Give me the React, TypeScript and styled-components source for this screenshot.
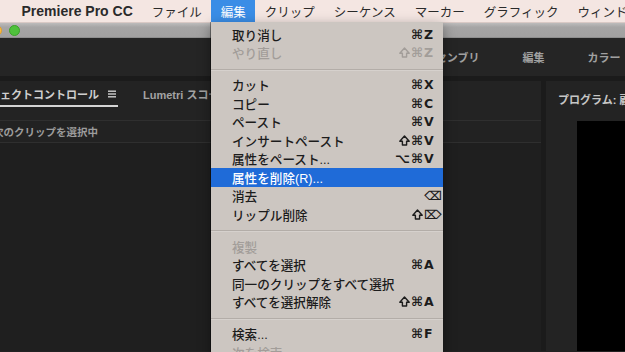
import styled, { createGlobalStyle } from 'styled-components';

const GlobalStyle = createGlobalStyle`
  html, body {
    margin: 0;
    padding: 0;
    background: #222222;
    overflow: hidden;
  }
  * {
    box-sizing: border-box;
  }
`;

const jp = `"Liberation Sans", "Noto Sans CJK JP", sans-serif`;

const Screen = styled.div`
  position: relative;
  width: 625px;
  height: 352px;
  overflow: hidden;
  background: #222222;
  font-family: ${jp};
`;

const MenuBar = styled.div`
  display: flex;
  align-items: center;
  height: 23px;
  padding-left: 12px;
  background: #f4e6e2;
  border-bottom: 1px solid #d9c9c5;
`;

type BarItemProps = { $active?: boolean; $bold?: boolean };

const BarItem = styled.div<BarItemProps>`
  display: flex;
  align-items: center;
  height: 22px;
  padding: 0 9.5px;
  white-space: nowrap;
  font-size: ${(p) => (p.$bold ? '14px' : '12.5px')};
  font-weight: ${(p) => (p.$bold ? 700 : 400)};
  color: ${(p) => (p.$active ? '#ffffff' : '#2a2a2a')};
  background: ${(p) => (p.$active ? '#3a8de6' : 'transparent')};
`;

const TitleBar = styled.div`
  display: flex;
  align-items: center;
  height: 15px;
  background: linear-gradient(#bdbcbc, #a6a5a5 30%, #a2a1a1);
  border-bottom: 1px solid #8e8e8e;
`;

const Lights = styled.div`
  display: flex;
  gap: 7px;
  margin-left: -27px;
`;

const Light = styled.span<{ $color: string; $edge: string }>`
  width: 11px;
  height: 11px;
  border-radius: 50%;
  background: ${(p) => p.$color};
  border: 1px solid ${(p) => p.$edge};
`;

const WorkspaceBar = styled.div`
  display: flex;
  align-items: center;
  gap: 43px;
  height: 43px;
  padding-left: 425px;
  background: #252525;
  border-bottom: 5px solid #1b1b1b;
`;

const WorkspaceTab = styled.span`
  font-size: 11px;
  font-weight: 700;
  color: #a0a0a0;
  white-space: nowrap;
`;

const Panels = styled.div`
  display: flex;
  height: 270px;
`;

const LeftPanel = styled.div`
  flex: 1;
  display: flex;
  flex-direction: column;
  background: #1f1f1f;
  overflow: hidden;
`;

const PanelHeader = styled.div`
  display: flex;
  align-items: flex-end;
  gap: 21px;
  height: 26px;
  background: #232323;
`;

const PanelTab = styled.div<{ $active?: boolean }>`
  display: flex;
  align-items: center;
  gap: 9px;
  height: 26px;
  padding: 2px 2px 0 4px;
  margin-left: ${(p) => (p.$active ? '-26px' : '0')};
  font-size: 11px;
  font-weight: 700;
  white-space: nowrap;
  color: ${(p) => (p.$active ? '#cfcfcf' : '#a3a3a3')};
  border-bottom: 2px solid ${(p) => (p.$active ? '#d4d4d4' : 'transparent')};
`;

const ToolStrip = styled.div`
  height: 14px;
  background: #232323;
  border-bottom: 1px solid #2f2f2f;
`;

const ClipRow = styled.div`
  display: flex;
  align-items: center;
  height: 22px;
  background: #222222;
  border-bottom: 1px solid #2f2f2f;
`;

const ClipText = styled.span`
  margin-left: -7px;
  font-size: 10.5px;
  font-weight: 700;
  color: #9c9c9c;
  white-space: nowrap;
`;

const Divider = styled.div`
  width: 5px;
  background: #1b1b1b;
`;

const RightPanel = styled.div`
  width: 79px;
  display: flex;
  flex-direction: column;
  background: #232323;
  overflow: hidden;
`;

const MonitorHeader = styled.div`
  display: flex;
  align-items: center;
  height: 40px;
  padding: 0 0 4px 12px;
  font-size: 11px;
  font-weight: 700;
  color: #c6c6c6;
  white-space: nowrap;
`;

const Video = styled.div`
  flex: 1;
  margin-left: 31px;
  background: #000000;
`;

const Dropdown = styled.div`
  position: absolute;
  left: 211px;
  top: 22px;
  width: 232px;
  padding-top: 3px;
  background: #ccc6c1;
  box-shadow: -1px 0 0 rgba(0, 0, 0, 0.35), 0 4px 12px rgba(0, 0, 0, 0.4);
`;

type RowProps = { $selected?: boolean; $disabled?: boolean };

const Row = styled.div<RowProps>`
  display: flex;
  align-items: center;
  height: 18.5px;
  padding: 0 7px 0 21px;
  font-size: 12.6px;
  font-weight: 500;
  white-space: nowrap;
  color: ${(p) => (p.$selected ? '#ffffff' : p.$disabled ? '#a29d99' : '#1c1c1c')};
  background: ${(p) => (p.$selected ? '#1f6bd8' : 'transparent')};
`;

const Label = styled.span`
  flex: 1;
`;

const Mods = styled.span`
  display: flex;
  align-items: center;
  gap: 1px;
  font-family: "DejaVu Sans", sans-serif;
  font-size: 13px;
  font-weight: 700;
`;

const Key = styled.span`
  width: 12px;
  margin-left: 1px;
  font-family: "DejaVu Sans", sans-serif;
  font-size: 12.5px;
  font-weight: 700;
  text-align: left;
  overflow: visible;
`;

const Separator = styled.div`
  height: 13.5px;
  padding-top: 6.5px;

  &::after {
    content: '';
    display: block;
    height: 1px;
    background: #b3ada8;
    box-shadow: 0 1px 0 #d6d1cd;
  }
`;

type Item = { label: string; mods?: string; key?: string; disabled?: boolean; selected?: boolean } | 'sep';

const items: Item[] = [
  { label: '取り消し', mods: '⌘', key: 'Z' },
  { label: 'やり直し', mods: '⇧⌘', key: 'Z', disabled: true },
  'sep',
  { label: 'カット', mods: '⌘', key: 'X' },
  { label: 'コピー', mods: '⌘', key: 'C' },
  { label: 'ペースト', mods: '⌘', key: 'V' },
  { label: 'インサートペースト', mods: '⇧⌘', key: 'V' },
  { label: '属性をペースト...', mods: '⌥⌘', key: 'V' },
  { label: '属性を削除(R)...', selected: true },
  { label: '消去', key: '⌫' },
  { label: 'リップル削除', mods: '⇧', key: '⌦' },
  'sep',
  { label: '複製', disabled: true },
  { label: 'すべてを選択', mods: '⌘', key: 'A' },
  { label: '同一のクリップをすべて選択' },
  { label: 'すべてを選択解除', mods: '⇧⌘', key: 'A' },
  'sep',
  { label: '検索...', mods: '⌘', key: 'F' },
  { label: '次を検索', disabled: true },
];

const barItems = ['ファイル', '編集', 'クリップ', 'シーケンス', 'マーカー', 'グラフィック', 'ウィンドウ'];

const MenuIcon = () => (
  <svg width="8" height="8" viewBox="0 0 8 8">
    <rect x="0" y="0.5" width="8" height="1.4" fill="#cfcfcf" />
    <rect x="0" y="3.3" width="8" height="1.4" fill="#cfcfcf" />
    <rect x="0" y="6.1" width="8" height="1.4" fill="#cfcfcf" />
  </svg>
);

// outlined shift arrow, drawn because the font glyph comes out too small
const ShiftIcon = () => (
  <svg width="11" height="11" viewBox="0 0 11 11">
    <path
      d="M5.5 1 L10.2 6.2 H7.6 V10 H3.4 V6.2 H0.8 Z"
      fill="none"
      stroke="currentColor"
      strokeWidth="1.4"
      strokeLinejoin="round"
    />
  </svg>
);

const renderMods = (mods: string) =>
  Array.from(mods).map((m, i) => (m === '⇧' ? <ShiftIcon key={i} /> : <span key={i}>{m}</span>));

export default function App() {
  return (
    <Screen>
      <GlobalStyle />
      <MenuBar>
        <BarItem $bold>Premiere Pro CC</BarItem>
        {barItems.map((name) => (
          <BarItem key={name} $active={name === '編集'}>
            {name}
          </BarItem>
        ))}
      </MenuBar>
      <TitleBar>
        <Lights>
          <Light $color="#fc605b" $edge="#de4a44" />
          <Light $color="#fdbc40" $edge="#de9f2c" />
          <Light $color="#4fc13c" $edge="#3ba12a" />
        </Lights>
      </TitleBar>
      <WorkspaceBar>
        <WorkspaceTab>アセンブリ</WorkspaceTab>
        <WorkspaceTab>編集</WorkspaceTab>
        <WorkspaceTab>カラー</WorkspaceTab>
      </WorkspaceBar>
      <Panels>
        <LeftPanel>
          <PanelHeader>
            <PanelTab $active>
              エフェクトコントロール
              <MenuIcon />
            </PanelTab>
            <PanelTab>Lumetri スコープ</PanelTab>
          </PanelHeader>
          <ToolStrip />
          <ClipRow>
            <ClipText>次のクリップを選択中</ClipText>
          </ClipRow>
        </LeftPanel>
        <Divider />
        <RightPanel>
          <MonitorHeader>プログラム: 顧客紹介</MonitorHeader>
          <Video />
        </RightPanel>
      </Panels>
      <Dropdown>
        {items.map((item, i) =>
          item === 'sep' ? (
            <Separator key={`sep-${i}`} />
          ) : (
            <Row key={item.label} $selected={item.selected} $disabled={item.disabled}>
              <Label>{item.label}</Label>
              {item.mods && <Mods>{renderMods(item.mods)}</Mods>}
              {(item.key || item.mods) && <Key>{item.key}</Key>}
            </Row>
          )
        )}
      </Dropdown>
    </Screen>
  );
}
